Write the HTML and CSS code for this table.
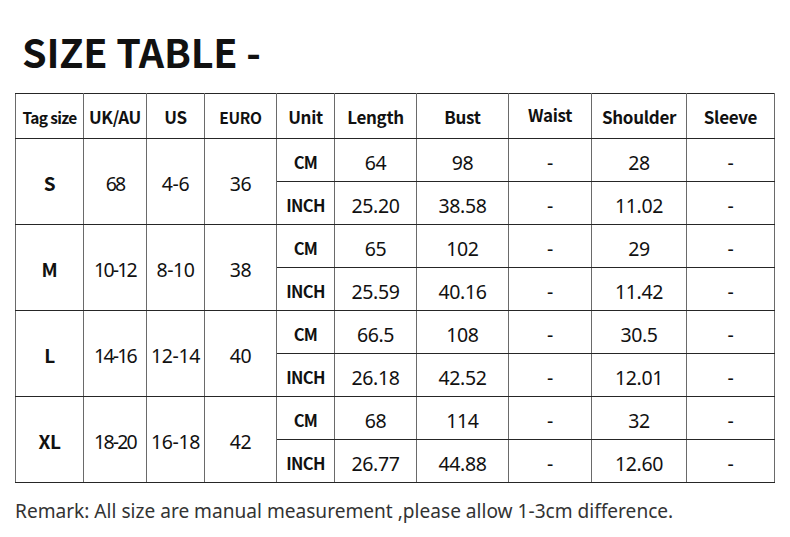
FILE: index.html
```html
<!DOCTYPE html>
<html>
<head>
<meta charset="utf-8">
<link rel="stylesheet" href="styles.css">
</head>
<body>
<div class="page">
  <h1 class="title">SIZE TABLE -</h1>
  <table class="size-table">
    <colgroup>
      <col style="width:68px"><col style="width:63px"><col style="width:58px"><col style="width:72px"><col style="width:58px"><col style="width:82px"><col style="width:92px"><col style="width:83px"><col style="width:95px"><col style="width:88px">
    </colgroup>
    <thead>
      <tr class="head">
        <th class="tag">Tag size</th><th>UK/AU</th><th>US</th><th class="euro">EURO</th><th>Unit</th><th>Length</th><th>Bust</th><th class="waist">Waist</th><th>Shoulder</th><th>Sleeve</th>
      </tr>
    </thead>
    <tbody>
      <tr class="cm"><td rowspan="2" class="size">S</td><td rowspan="2" class="group cond">68</td><td rowspan="2" class="group">4-6</td><td rowspan="2" class="group">36</td><td class="unit">CM</td><td>64</td><td>98</td><td class="dash">-</td><td>28</td><td class="dash">-</td></tr>
      <tr class="inch"><td class="unit">INCH</td><td>25.20</td><td>38.58</td><td class="dash">-</td><td>11.02</td><td class="dash">-</td></tr>
      <tr class="cm"><td rowspan="2" class="size">M</td><td rowspan="2" class="group cond">10-12</td><td rowspan="2" class="group">8-10</td><td rowspan="2" class="group">38</td><td class="unit">CM</td><td>65</td><td>102</td><td class="dash">-</td><td>29</td><td class="dash">-</td></tr>
      <tr class="inch"><td class="unit">INCH</td><td>25.59</td><td>40.16</td><td class="dash">-</td><td>11.42</td><td class="dash">-</td></tr>
      <tr class="cm"><td rowspan="2" class="size">L</td><td rowspan="2" class="group cond">14-16</td><td rowspan="2" class="group">12-14</td><td rowspan="2" class="group">40</td><td class="unit">CM</td><td>66.5</td><td>108</td><td class="dash">-</td><td>30.5</td><td class="dash">-</td></tr>
      <tr class="inch"><td class="unit">INCH</td><td>26.18</td><td>42.52</td><td class="dash">-</td><td>12.01</td><td class="dash">-</td></tr>
      <tr class="cm"><td rowspan="2" class="size">XL</td><td rowspan="2" class="group cond">18-20</td><td rowspan="2" class="group">16-18</td><td rowspan="2" class="group">42</td><td class="unit">CM</td><td>68</td><td>114</td><td class="dash">-</td><td>32</td><td class="dash">-</td></tr>
      <tr class="inch"><td class="unit">INCH</td><td>26.77</td><td>44.88</td><td class="dash">-</td><td>12.60</td><td class="dash">-</td></tr>
    </tbody>
  </table>
  <p class="remark">Remark: All size are manual measurement ,please allow 1-3cm difference.</p>
</div>
</body>
</html>
```
FILE: styles.css
```css
html, body {
  margin: 0;
  padding: 0;
  background: #fff;
}
.page {
  width: 790px;
  height: 537px;
  overflow: hidden;
  padding-top: 26px;
  box-sizing: border-box;
}
.title {
  margin: 0 0 0 22px;
  font-family: "Noto Sans CJK SC", "Noto Sans", sans-serif;
  font-weight: 700;
  font-size: 39.5px;
  line-height: 50px;
  height: 67px;
  color: #111;
  letter-spacing: -0.2px;
}
.size-table {
  margin-left: 15px;
  border-collapse: collapse;
  table-layout: fixed;
  width: 760px;
  color: #111;
}
.size-table th,
.size-table td {
  border-left: 1px solid #6a6a6a;
  border-right: 1px solid #6a6a6a;
  border-top: 1.5px solid #262626;
  border-bottom: 1.5px solid #262626;
  padding: 0;
  text-align: center;
  vertical-align: middle;
}
.size-table tr.head {
  height: 45px;
}
.size-table tr.cm,
.size-table tr.inch {
  height: 43px;
}
.size-table th {
  padding-top: 2px;
  font-family: "Noto Sans CJK SC", "Noto Sans", sans-serif;
  font-weight: 700;
  font-size: 17px;
  line-height: 24px;
  letter-spacing: -0.3px;
}
.size-table th.tag {
  font-size: 15.5px;
  letter-spacing: -0.7px;
}
.size-table th.euro {
  font-size: 15.5px;
}
.size-table th.waist {
  padding-top: 0;
  padding-bottom: 3px;
}
.size-table td {
  padding-top: 6px;
  font-family: "Noto Sans", sans-serif;
  font-size: 19.5px;
  line-height: 26px;
  letter-spacing: -0.4px;
}
.size-table td.group {
  padding-top: 4px;
}
.size-table td.size {
  padding-top: 2px;
  font-family: "Noto Sans CJK SC", "Noto Sans", sans-serif;
  font-weight: 700;
  font-size: 19px;
}
.size-table td.cond {
  letter-spacing: -1.8px;
}
.size-table td.unit {
  padding-top: 4px;
  font-family: "Noto Sans CJK SC", "Noto Sans", sans-serif;
  font-weight: 700;
  font-size: 16.5px;
  letter-spacing: -0.6px;
}
.remark {
  margin: 15px 0 0 15px;
  font-family: "Noto Sans", sans-serif;
  font-size: 19.1px;
  line-height: 26px;
  color: #333;
}
```
